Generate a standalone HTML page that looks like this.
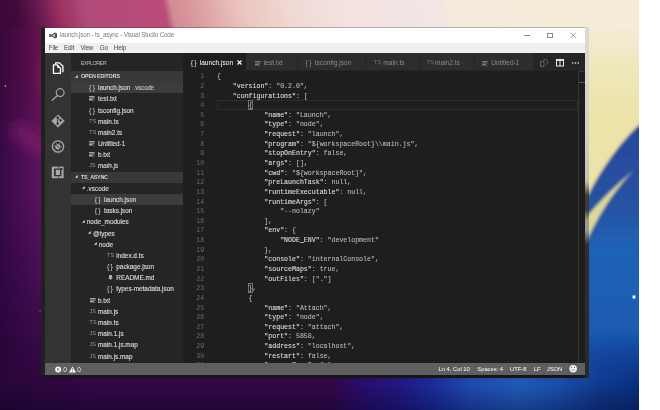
<!DOCTYPE html>
<html><head><meta charset="utf-8">
<style>
*{margin:0;padding:0;box-sizing:border-box}
html,body{width:660px;height:410px;overflow:hidden}
body{position:relative;font-family:"Liberation Sans",sans-serif;background:#3e0a4c}
.a{position:absolute}
#white{left:639px;top:0;width:21px;height:410px;background:#fff}
#bl{left:41px;top:27px;width:4px;height:351px;background:#202020}
#bb{left:41px;top:375px;width:548px;height:3px;background:#161616}
#bt{left:41px;top:27px;width:548px;height:1px;background:rgba(60,60,60,.35)}
#br{left:585px;top:27px;width:4px;height:351px;background:linear-gradient(#dcdad4 0,#d2d0c6 30%,#c4c2b4 44%,#3c3c3c 48%,#3a3a3a 52%,#9a9a90 55%,#9a9a90 58%,#2e2e2e 62%,#2a2a2a 100%)}
#title{left:45px;top:28px;width:540px;height:15px;background:#fff}
#menu{left:45px;top:43px;width:540px;height:10px;background:#f0f0f0}
#act{left:45px;top:53px;width:26px;height:310px;background:#333}
#side{left:71px;top:53px;width:112px;height:310px;background:#252526;overflow:hidden}
#tabs{left:183px;top:53px;width:402px;height:18px;background:#252526}
#ed{left:183px;top:71px;width:402px;height:292px;background:#1e1e1e;overflow:hidden}
#status{left:45px;top:363px;width:540px;height:12px;background:#5f5f5f}
.t{white-space:nowrap}
.tt{font-size:6.3px;color:#7c7c7c;line-height:14px;letter-spacing:-0.17px}
.mn{font-size:6.3px;color:#4a4a4a;line-height:10px;letter-spacing:-0.2px}
.sh{left:0;width:112px;height:11.18px;background:#383838}
.sel{left:0;width:112px;height:11.18px;background:#3c3c3c}
.sx{font-size:6.4px;color:#d6d6d6;line-height:11.18px;white-space:nowrap;-webkit-text-stroke:0.15px #d6d6d6}
.ic{font-size:6px;color:#c5c5c5;line-height:11.18px;white-space:nowrap}
.lang{font-size:5.4px;color:#9a9a9a;line-height:11.18px;white-space:nowrap;letter-spacing:0.1px}
.hd{font-size:5.4px;color:#d6d6d6;line-height:11.18px;font-weight:bold;white-space:nowrap;letter-spacing:-0.15px}
.tri{width:0;height:0;border-left:2.2px solid transparent;border-right:2.2px solid transparent;border-top:2.6px solid #c0c0c0;transform:rotate(-45deg)}
.code{font-family:"Liberation Mono",monospace;font-size:6.58px;color:#cccccc;white-space:pre;line-height:9.61px}
.k{color:#dadada;-webkit-text-stroke:0.12px #dadada}.v{color:#b8b8b8;-webkit-text-stroke:0.1px #b8b8b8}
.ln{font-family:"Liberation Mono",monospace;font-size:6.58px;color:#6a6a6a;white-space:pre;line-height:9.61px;text-align:right;width:30px}
.tab{top:0;height:17px;background:#2d2d2d;border-right:1px solid #252526}
.tabt{font-size:6.6px;color:#8c8c8c;line-height:17px;white-space:nowrap}
.sb{font-size:5.8px;color:#fff;line-height:12px;white-space:nowrap}
</style></head><body>
<div id="root" class="a" style="left:0;top:0;width:660px;height:410px;overflow:hidden;will-change:transform">
<svg class="a" style="left:0;top:0" width="660" height="410" viewBox="0 0 660 410">
<defs>
<linearGradient id="gTop" gradientUnits="userSpaceOnUse" x1="0" y1="13.5" x2="629.5" y2="-125">
<stop offset="0.0000" stop-color="#3a0a38"/>
<stop offset="0.0273" stop-color="#400b3b"/>
<stop offset="0.0606" stop-color="#6a1a50"/>
<stop offset="0.0909" stop-color="#9a3060"/>
<stop offset="0.1288" stop-color="#b04a78"/>
<stop offset="0.2500" stop-color="#bb4c7a"/>
<stop offset="0.2621" stop-color="#d38a96"/>
<stop offset="0.3030" stop-color="#dc9fa0"/>
<stop offset="0.3636" stop-color="#eac4bc"/>
<stop offset="0.4394" stop-color="#f0d8d2"/>
<stop offset="0.5152" stop-color="#f2e2e0"/>
<stop offset="0.6712" stop-color="#f3e6e5"/>
<stop offset="0.6803" stop-color="#f6ebdb"/>
<stop offset="1.0000" stop-color="#f6ecd8"/>
</linearGradient>
<linearGradient id="gLA" gradientUnits="userSpaceOnUse" x1="0" y1="0" x2="45" y2="0">
<stop offset="0" stop-color="#3a083a"/><stop offset="0.45" stop-color="#4a0c44"/><stop offset="1" stop-color="#6c1450"/>
</linearGradient>
<linearGradient id="gLB" gradientUnits="userSpaceOnUse" x1="0" y1="0" x2="45" y2="0">
<stop offset="0" stop-color="#360a46"/><stop offset="0.5" stop-color="#4a0e55"/><stop offset="1" stop-color="#5c1660"/>
</linearGradient>
<linearGradient id="gLC" gradientUnits="userSpaceOnUse" x1="0" y1="0" x2="45" y2="0">
<stop offset="0" stop-color="#28063a"/><stop offset="1" stop-color="#3a0a4c"/>
</linearGradient>
<linearGradient id="mB" gradientUnits="userSpaceOnUse" x1="0" y1="60" x2="0" y2="160">
<stop offset="0" stop-color="#fff" stop-opacity="0"/><stop offset="1" stop-color="#fff" stop-opacity="1"/>
</linearGradient>
<linearGradient id="mC" gradientUnits="userSpaceOnUse" x1="0" y1="200" x2="0" y2="350">
<stop offset="0" stop-color="#fff" stop-opacity="0"/><stop offset="1" stop-color="#fff" stop-opacity="1"/>
</linearGradient>
<linearGradient id="mBot" gradientUnits="userSpaceOnUse" x1="0" y1="335" x2="0" y2="385"><stop offset="0" stop-color="#fff" stop-opacity="0"/><stop offset="1" stop-color="#fff" stop-opacity="1"/></linearGradient>
<mask id="maskBot"><rect x="0" y="0" width="660" height="410" fill="url(#mBot)"/></mask>
<mask id="maskB"><rect x="0" y="0" width="660" height="410" fill="url(#mB)"/></mask>
<mask id="maskC"><rect x="0" y="0" width="660" height="410" fill="url(#mC)"/></mask>
<linearGradient id="gBot" gradientUnits="userSpaceOnUse" x1="0" y1="0" x2="660" y2="0">
<stop offset="0.0000" stop-color="#2a063a"/>
<stop offset="0.1515" stop-color="#340846"/>
<stop offset="0.5000" stop-color="#340846"/>
<stop offset="0.5394" stop-color="#2c0c6a"/>
<stop offset="0.6061" stop-color="#221a86"/>
<stop offset="0.6515" stop-color="#1c2c9e"/>
<stop offset="0.7121" stop-color="#1f4eb6"/>
<stop offset="0.7879" stop-color="#2260c0"/>
<stop offset="0.8485" stop-color="#1a52b0"/>
<stop offset="0.9091" stop-color="#0f3c92"/>
<stop offset="0.9682" stop-color="#0a3080"/>
<stop offset="1.0000" stop-color="#0a3080"/>
</linearGradient>
<linearGradient id="gBotV" gradientUnits="userSpaceOnUse" x1="0" y1="380" x2="0" y2="410"><stop offset="0" stop-color="#000020" stop-opacity="0"/><stop offset="1" stop-color="#000020" stop-opacity="0.35"/></linearGradient>
<linearGradient id="gRight" gradientUnits="userSpaceOnUse" x1="0" y1="0" x2="0" y2="410">
<stop offset="0" stop-color="#f6ecd6"/>
<stop offset="0.1" stop-color="#f3ead0"/>
<stop offset="0.16" stop-color="#efe7bc"/>
<stop offset="0.28" stop-color="#ebe3a8"/>
<stop offset="1" stop-color="#e8e0a0"/>
</linearGradient>
<linearGradient id="gBlue" gradientUnits="userSpaceOnUse" x1="0" y1="120" x2="0" y2="410">
<stop offset="0" stop-color="#27489a"/>
<stop offset="0.3" stop-color="#2552a2"/>
<stop offset="0.45" stop-color="#1e62b6"/>
<stop offset="0.72" stop-color="#1a5ab0"/>
<stop offset="0.88" stop-color="#1446a0"/>
<stop offset="1" stop-color="#0a2c78"/>
</linearGradient>
<filter id="bl2" filterUnits="userSpaceOnUse" x="-20" y="40" width="90" height="200"><feGaussianBlur stdDeviation="7"/></filter>
<filter id="fblur" filterUnits="userSpaceOnUse" x="560" y="0" width="100" height="410"><feGaussianBlur stdDeviation="1.6"/></filter>
</defs>
<rect width="660" height="410" fill="#2d053c"/>
<rect x="0" y="0" width="45" height="410" fill="url(#gLA)"/>
<rect x="0" y="0" width="45" height="410" fill="url(#gLB)" mask="url(#maskB)"/>
<rect x="0" y="0" width="45" height="410" fill="url(#gLC)" mask="url(#maskC)"/>
<g filter="url(#bl2)"><ellipse cx="32" cy="140" rx="26" ry="11" fill="#7c1c66" opacity="0.75" transform="rotate(38 32 140)"/><ellipse cx="42" cy="75" rx="8" ry="30" fill="#6c1450" opacity="0.3"/></g>
<g filter="url(#fblur)">
<rect x="585" y="0" width="75" height="380" fill="url(#gRight)"/>
<path d="M660 110 L639 125 Q612 150 589 193 L578 212 L578 410 L660 410 Z" fill="url(#gBlue)"/>
<path d="M578 222 L589 214 Q606 194 634 170 Q608 196 589 236 L578 250 Z" fill="#dcd89a"/>
</g>
<rect x="0" y="330" width="660" height="80" fill="url(#gBot)" mask="url(#maskBot)"/>
<rect x="0" y="375" width="660" height="35" fill="url(#gBotV)"/>
<rect x="0" y="0" width="660" height="28" fill="url(#gTop)"/>
<circle cx="634" cy="297" r="2.2" fill="#9fc8ff" opacity="0.6"/><circle cx="634" cy="297" r="1.2" fill="#fff"/><circle cx="5.5" cy="86" r="0.8" fill="#e0c8e0"/><circle cx="40" cy="311" r="0.5" fill="#c8a8d8"/>
</svg>

<div id="white" class="a"></div>
<div id="bl" class="a"></div>
<div id="bb" class="a"></div>
<div id="bt" class="a"></div>
<div id="br" class="a"></div>
<div id="title" class="a"></div>
<div id="menu" class="a"></div>
<div id="act" class="a"></div>
<div id="side" class="a"></div>
<div id="tabs" class="a"></div>
<div id="ed" class="a"></div>
<div id="status" class="a"></div>
<svg class="a" style="left:48.6px;top:32px" width="8.4" height="7" viewBox="0 0 8.4 7"><g fill="#5a5a5a"><path d="M5.7 0.4 L8.1 1.2 V5.8 L5.7 6.6 Z"/><rect x="0.2" y="2" width="1.3" height="3"/></g><path d="M1 2.3 L6.2 6 M1 4.7 L6.2 1" stroke="#5a5a5a" stroke-width="1.25"/></svg>
<div class="a t tt" style="left:60px;top:28px">launch.json - ts_async - Visual Studio Code</div>
<div class="a" style="left:524px;top:34.7px;width:6px;height:0.8px;background:#8a8a8a"></div>
<div class="a" style="left:547px;top:32.6px;width:5.6px;height:5.4px;border:0.8px solid #8a8a8a"></div>
<svg class="a" style="left:570px;top:32px" width="7" height="7" viewBox="0 0 7 7"><path d="M0.5 0.5 L6 6 M6 0.5 L0.5 6" stroke="#8a8a8a" stroke-width="0.8"/></svg>
<div class="a t mn" style="left:48.8px;top:43px">File</div>
<div class="a t mn" style="left:63.9px;top:43px">Edit</div>
<div class="a t mn" style="left:80.4px;top:43px">View</div>
<div class="a t mn" style="left:99.8px;top:43px">Go</div>
<div class="a t mn" style="left:113.8px;top:43px">Help</div>
<svg class="a" style="left:45px;top:53px" width="26" height="310" viewBox="0 0 26 310">
<g fill="none" stroke="#ffffff" stroke-width="1.3" stroke-linejoin="round">
<path d="M8.45 11.95 H12.3 L15.45 15.1 V20.45 H8.45 Z"/>
<path d="M10.6 11.3 V9.85 H14.5 L17.9 13.25 V19.2"/>
</g>
<path d="M12.3 11.95 V15.1 H15.45 Z" fill="#ffffff"/>
<g fill="none" stroke="#a0a0a0" stroke-width="1.25">
<circle cx="15.2" cy="39.6" r="3.9"/>
<path d="M12.4 42.6 L7.2 47.2" stroke-width="1.5" stroke-linecap="round"/>
</g>
<path d="M13 61.8 L19.4 68 L13 74.3 L6.7 68 Z" fill="#a8a8a8" stroke="#a8a8a8" stroke-width="0.6" stroke-linejoin="round"/>
<g stroke="#333" stroke-width="0.9" fill="#333"><path d="M12.6 64.6 V70.6 M12.6 64.6 L15.5 67.3"/><circle cx="12.6" cy="64.6" r="0.9"/><circle cx="12.6" cy="70.6" r="0.9"/><circle cx="15.6" cy="67.4" r="0.9"/></g>
<circle cx="13" cy="93.5" r="5.7" fill="none" stroke="#a8a8a8" stroke-width="1.25"/>
<path d="M11.2 91.4 Q13.3 90.2 15.2 92.3 L15.6 95 Q14.2 97.2 11.8 96.2 Q10 94.8 10.3 92.6 Z" fill="#a8a8a8"/>
<g stroke="#a8a8a8" stroke-width="0.7"><path d="M11.6 91.2 L10.6 89.6 M14.4 91.2 L15.2 89.5 M10.3 93.5 L8.8 93.3 M15.6 93.8 L17.2 93.6 M10.8 95.5 L9.5 96.8"/></g>
<path d="M9.3 89.8 L16.9 97.3" stroke="#333" stroke-width="0.9"/>
<rect x="6.8" y="113.6" width="11.8" height="11.6" fill="#a8a8a8"/>
<rect x="9" y="115.5" width="7.5" height="7.8" fill="#333"/>
<rect x="10.8" y="116.8" width="4.2" height="5.2" fill="#a8a8a8"/>
<path d="M13.4 113.4 V115.6 M13.4 123.2 V125.4" stroke="#333" stroke-width="0.8"/>
<rect x="15.6" y="115" width="1.8" height="2" fill="#333"/>
</svg>
<div class="a" style="left:71px;top:53px;width:112px;height:310px;overflow:hidden"><div class="a t hd" style="left:9.7px;top:5px;font-weight:normal;color:#bbbbbb;font-size:5.4px;letter-spacing:-0.5px;line-height:10px">EXPLORER</div><div class="a sh" style="top:18.00px"></div><div class="a sh" style="top:118.62px"></div><div class="a sel" style="top:29.18px"></div><div class="a sel" style="top:140.98px"></div><svg class="a" style="left:2.90px;top:20.69px" width="5" height="5" viewBox="0 0 5 5"><polygon points="3.8,0.9 3.8,3.7 0.9,3.7" fill="#d8d8d8"/></svg><div class="a hd" style="left:10.00px;top:18.00px;">OPEN EDITORS</div><div class="a ic" style="left:18.00px;top:29.18px;letter-spacing:1.3px;font-size:7px;color:#d0d0d0">{}</div><div class="a sx" style="left:27.00px;top:29.18px;">launch.json</div><svg class="a" style="left:18.30px;top:43.45px" width="6" height="5" viewBox="0 0 6 5"><path d="M0 0.6H5.6M0 2.1H5.6M0 3.6H3.8M0 5.1H5.6" stroke="#c8c8c8" stroke-width="0.85"/></svg><div class="a sx" style="left:27.00px;top:40.36px;">test.txt</div><div class="a ic" style="left:18.00px;top:51.54px;letter-spacing:1.3px;font-size:7px;color:#d0d0d0">{}</div><div class="a sx" style="left:27.00px;top:51.54px;">tsconfig.json</div><div class="a lang" style="left:18.30px;top:62.72px;">TS</div><div class="a sx" style="left:27.00px;top:62.72px;">main.ts</div><div class="a lang" style="left:18.30px;top:73.90px;">TS</div><div class="a sx" style="left:27.00px;top:73.90px;">main2.ts</div><svg class="a" style="left:18.30px;top:88.17px" width="6" height="5" viewBox="0 0 6 5"><path d="M0 0.6H5.6M0 2.1H5.6M0 3.6H3.8M0 5.1H5.6" stroke="#c8c8c8" stroke-width="0.85"/></svg><div class="a sx" style="left:27.00px;top:85.08px;">Untitled-1</div><svg class="a" style="left:18.30px;top:99.35px" width="6" height="5" viewBox="0 0 6 5"><path d="M0 0.6H5.6M0 2.1H5.6M0 3.6H3.8M0 5.1H5.6" stroke="#c8c8c8" stroke-width="0.85"/></svg><div class="a sx" style="left:27.00px;top:96.26px;">b.txt</div><div class="a lang" style="left:18.30px;top:107.44px;">JS</div><div class="a sx" style="left:27.00px;top:107.44px;font-style:italic">main.js</div><div class="a sx" style="left:62.80px;top:29.18px;font-size:6.3px;color:#a8a8a8;letter-spacing:-0.2px">.vscode</div><svg class="a" style="left:2.90px;top:121.31px" width="5" height="5" viewBox="0 0 5 5"><polygon points="3.8,0.9 3.8,3.7 0.9,3.7" fill="#d8d8d8"/></svg><div class="a hd" style="left:10.00px;top:118.62px;letter-spacing:-0.25px">TS_ASYNC</div><svg class="a" style="left:9.90px;top:132.49px" width="5" height="5" viewBox="0 0 5 5"><polygon points="3.8,0.9 3.8,3.7 0.9,3.7" fill="#d8d8d8"/></svg><div class="a sx" style="left:15.80px;top:129.80px;">.vscode</div><div class="a ic" style="left:23.70px;top:140.98px;letter-spacing:1.3px;font-size:7px;color:#d0d0d0">{}</div><div class="a sx" style="left:33.00px;top:140.98px;">launch.json</div><div class="a ic" style="left:23.70px;top:152.16px;letter-spacing:1.3px;font-size:7px;color:#d0d0d0">{}</div><div class="a sx" style="left:33.00px;top:152.16px;">tasks.json</div><svg class="a" style="left:9.90px;top:166.03px" width="5" height="5" viewBox="0 0 5 5"><polygon points="3.8,0.9 3.8,3.7 0.9,3.7" fill="#d8d8d8"/></svg><div class="a sx" style="left:15.80px;top:163.34px;">node_modules</div><svg class="a" style="left:15.70px;top:177.21px" width="5" height="5" viewBox="0 0 5 5"><polygon points="3.8,0.9 3.8,3.7 0.9,3.7" fill="#d8d8d8"/></svg><div class="a sx" style="left:22.00px;top:174.52px;">@types</div><svg class="a" style="left:22.30px;top:188.39px" width="5" height="5" viewBox="0 0 5 5"><polygon points="3.8,0.9 3.8,3.7 0.9,3.7" fill="#d8d8d8"/></svg><div class="a sx" style="left:27.80px;top:185.70px;">node</div><div class="a lang" style="left:36.00px;top:196.88px;">TS</div><div class="a sx" style="left:45.30px;top:196.88px;">index.d.ts</div><div class="a ic" style="left:35.90px;top:208.06px;letter-spacing:1.3px;font-size:7px;color:#d0d0d0">{}</div><div class="a sx" style="left:45.30px;top:208.06px;">package.json</div><svg class="a" style="left:37.20px;top:222.33px" width="5" height="5" viewBox="0 0 5 5"><path d="M1 0H4V2.5H5L2.5 5L0 2.5H1Z" fill="#aaaaaa"/></svg><div class="a sx" style="left:45.30px;top:219.24px;">README.md</div><div class="a ic" style="left:35.90px;top:230.42px;letter-spacing:1.3px;font-size:7px;color:#d0d0d0">{}</div><div class="a sx" style="left:45.30px;top:230.42px;">types-metadata.json</div><svg class="a" style="left:18.50px;top:244.69px" width="6" height="5" viewBox="0 0 6 5"><path d="M0 0.6H5.6M0 2.1H5.6M0 3.6H3.8M0 5.1H5.6" stroke="#c8c8c8" stroke-width="0.85"/></svg><div class="a sx" style="left:27.00px;top:241.60px;">b.txt</div><div class="a lang" style="left:18.50px;top:252.78px;">JS</div><div class="a sx" style="left:27.00px;top:252.78px;">main.js</div><div class="a lang" style="left:18.50px;top:263.96px;">TS</div><div class="a sx" style="left:27.00px;top:263.96px;">main.ts</div><div class="a lang" style="left:18.50px;top:275.14px;">JS</div><div class="a sx" style="left:27.00px;top:275.14px;">main.1.js</div><div class="a lang" style="left:18.50px;top:286.32px;">JS</div><div class="a sx" style="left:27.00px;top:286.32px;">main.1.js.map</div><div class="a lang" style="left:18.50px;top:297.50px;">JS</div><div class="a sx" style="left:27.00px;top:297.50px;">main.js.map</div></div>
<div class="a" style="left:183px;top:53px;width:63px;height:18px;background:#1e1e1e;"></div>
<div class="a" style="left:246px;top:53px;width:52px;height:18px;background:#2d2d2d;border-right:1px solid #252526;border-bottom:1px solid #252526"></div>
<div class="a" style="left:298px;top:53px;width:68px;height:18px;background:#2d2d2d;border-right:1px solid #252526;border-bottom:1px solid #252526"></div>
<div class="a" style="left:366px;top:53px;width:54px;height:18px;background:#2d2d2d;border-right:1px solid #252526;border-bottom:1px solid #252526"></div>
<div class="a" style="left:420px;top:53px;width:55px;height:18px;background:#2d2d2d;border-right:1px solid #252526;border-bottom:1px solid #252526"></div>
<div class="a" style="left:475px;top:53px;width:59px;height:18px;background:#2d2d2d;border-right:1px solid #252526;border-bottom:1px solid #252526"></div>
<div class="a t" style="left:190.7px;top:53.5px;font-size:7px;line-height:18px;color:#e0e0e0;letter-spacing:1.3px">{}</div>
<div class="a t tabt" style="left:199.7px;top:54px;color:#ffffff;line-height:18px">launch.json</div>
<svg class="a" style="left:254.8px;top:60.5px" width="6" height="5" viewBox="0 0 6 5"><path d="M0 0.5H5.5M0 2H5.5M0 3.5H4M0 5H5.5" stroke="#8a8a8a" stroke-width="0.8"/></svg>
<div class="a t tabt" style="left:263.4px;top:54px;color:#8c8c8c;line-height:18px">test.txt</div>
<div class="a t" style="left:305.5px;top:53.5px;font-size:7px;line-height:18px;color:#8a8a8a;letter-spacing:1.3px">{}</div>
<div class="a t tabt" style="left:314.7px;top:54px;color:#8c8c8c;line-height:18px">tsconfig.json</div>
<div class="a t" style="left:373.6px;top:53.2px;font-size:6px;line-height:18px;color:#6e6e6e;letter-spacing:0px">TS</div>
<div class="a t tabt" style="left:383.3px;top:54px;color:#8c8c8c;line-height:18px">main.ts</div>
<div class="a t" style="left:426.4px;top:53.2px;font-size:6px;line-height:18px;color:#6e6e6e;letter-spacing:0px">TS</div>
<div class="a t tabt" style="left:435px;top:54px;color:#8c8c8c;line-height:18px">main2.ts</div>
<svg class="a" style="left:482.3px;top:60.5px" width="6" height="5" viewBox="0 0 6 5"><path d="M0 0.5H5.5M0 2H5.5M0 3.5H4M0 5H5.5" stroke="#8a8a8a" stroke-width="0.8"/></svg>
<div class="a t tabt" style="left:491.3px;top:54px;color:#8c8c8c;line-height:18px">Untitled-1</div>
<svg class="a" style="left:237px;top:60px" width="5" height="5" viewBox="0 0 5 5"><path d="M0.5 0.5 L4.5 4.5 M4.5 0.5 L0.5 4.5" stroke="#ffffff" stroke-width="1.1"/></svg>
<svg class="a" style="left:538px;top:57px" width="46" height="12" viewBox="0 0 46 12">
<g fill="none" stroke="#6a6a6a" stroke-width="0.9"><path d="M2.5 4.5 H6 V9.5 H2.5 Z"/><path d="M5 3 A2.6 2.6 0 1 1 8.5 7.5"/></g>
<g fill="none" stroke="#e8e8e8" stroke-width="1"><rect x="18.5" y="2.5" width="7" height="6.5"/><path d="M22 2.5 V9"/><path d="M18.5 3.2 H25.5" stroke-width="1.4"/></g>
<g fill="#d8d8d8"><rect x="34" y="5.3" width="1.4" height="1.4"/><rect x="36.8" y="5.3" width="1.4" height="1.4"/><rect x="39.6" y="5.3" width="1.4" height="1.4"/></g>
</svg>
<div class="a" style="left:183px;top:71px;width:402px;height:292px;overflow:hidden"><div class="a" style="left:34px;top:29.10px;width:361px;height:9.63px;border:1px solid #2c2c2c"></div><div class="a" style="left:64.98px;top:29.20px;width:4.95px;height:9.44px;border:0.8px solid #747474;background:#1e1e1e"></div><div class="a" style="left:64.98px;top:212.27px;width:4.95px;height:9.44px;border:0.8px solid #747474;background:#1e1e1e"></div><div class="a ln" style="left:-8.8px;top:1.30px">1</div><div class="a code" style="left:34px;top:1.30px">{</div><div class="a ln" style="left:-8.8px;top:10.93px">2</div><div class="a code" style="left:34px;top:10.93px"><span class="k">    &quot;version&quot;</span>:<span class="v"> &quot;0.2.0&quot;,</span></div><div class="a ln" style="left:-8.8px;top:20.57px">3</div><div class="a code" style="left:34px;top:20.57px"><span class="k">    &quot;configurations&quot;</span>:<span class="v"> [</span></div><div class="a ln" style="left:-8.8px;top:30.20px">4</div><div class="a code" style="left:34px;top:30.20px">        {</div><div class="a ln" style="left:-8.8px;top:39.84px">5</div><div class="a code" style="left:34px;top:39.84px"><span class="k">            &quot;name&quot;</span>:<span class="v"> &quot;Launch&quot;,</span></div><div class="a ln" style="left:-8.8px;top:49.47px">6</div><div class="a code" style="left:34px;top:49.47px"><span class="k">            &quot;type&quot;</span>:<span class="v"> &quot;node&quot;,</span></div><div class="a ln" style="left:-8.8px;top:59.11px">7</div><div class="a code" style="left:34px;top:59.11px"><span class="k">            &quot;request&quot;</span>:<span class="v"> &quot;launch&quot;,</span></div><div class="a ln" style="left:-8.8px;top:68.74px">8</div><div class="a code" style="left:34px;top:68.74px"><span class="k">            &quot;program&quot;</span>:<span class="v"> &quot;${workspaceRoot}\\main.js&quot;,</span></div><div class="a ln" style="left:-8.8px;top:78.38px">9</div><div class="a code" style="left:34px;top:78.38px"><span class="k">            &quot;stopOnEntry&quot;</span>:<span class="v"> false,</span></div><div class="a ln" style="left:-8.8px;top:88.02px">10</div><div class="a code" style="left:34px;top:88.02px"><span class="k">            &quot;args&quot;</span>:<span class="v"> [],</span></div><div class="a ln" style="left:-8.8px;top:97.65px">11</div><div class="a code" style="left:34px;top:97.65px"><span class="k">            &quot;cwd&quot;</span>:<span class="v"> &quot;${workspaceRoot}&quot;,</span></div><div class="a ln" style="left:-8.8px;top:107.28px">12</div><div class="a code" style="left:34px;top:107.28px"><span class="k">            &quot;preLaunchTask&quot;</span>:<span class="v"> null,</span></div><div class="a ln" style="left:-8.8px;top:116.92px">13</div><div class="a code" style="left:34px;top:116.92px"><span class="k">            &quot;runtimeExecutable&quot;</span>:<span class="v"> null,</span></div><div class="a ln" style="left:-8.8px;top:126.55px">14</div><div class="a code" style="left:34px;top:126.55px"><span class="k">            &quot;runtimeArgs&quot;</span>:<span class="v"> [</span></div><div class="a ln" style="left:-8.8px;top:136.19px">15</div><div class="a code" style="left:34px;top:136.19px"><span class="v">                &quot;--nolazy&quot;</span></div><div class="a ln" style="left:-8.8px;top:145.82px">16</div><div class="a code" style="left:34px;top:145.82px">            ],</div><div class="a ln" style="left:-8.8px;top:155.46px">17</div><div class="a code" style="left:34px;top:155.46px"><span class="k">            &quot;env&quot;</span>:<span class="v"> {</span></div><div class="a ln" style="left:-8.8px;top:165.09px">18</div><div class="a code" style="left:34px;top:165.09px"><span class="k">                &quot;NODE_ENV&quot;</span>:<span class="v"> &quot;development&quot;</span></div><div class="a ln" style="left:-8.8px;top:174.73px">19</div><div class="a code" style="left:34px;top:174.73px">            },</div><div class="a ln" style="left:-8.8px;top:184.37px">20</div><div class="a code" style="left:34px;top:184.37px"><span class="k">            &quot;console&quot;</span>:<span class="v"> &quot;internalConsole&quot;,</span></div><div class="a ln" style="left:-8.8px;top:194.00px">21</div><div class="a code" style="left:34px;top:194.00px"><span class="k">            &quot;sourceMaps&quot;</span>:<span class="v"> true,</span></div><div class="a ln" style="left:-8.8px;top:203.63px">22</div><div class="a code" style="left:34px;top:203.63px"><span class="k">            &quot;outFiles&quot;</span>:<span class="v"> [&quot;.&quot;]</span></div><div class="a ln" style="left:-8.8px;top:213.27px">23</div><div class="a code" style="left:34px;top:213.27px">        },</div><div class="a ln" style="left:-8.8px;top:222.90px">24</div><div class="a code" style="left:34px;top:222.90px">        {</div><div class="a ln" style="left:-8.8px;top:232.54px">25</div><div class="a code" style="left:34px;top:232.54px"><span class="k">            &quot;name&quot;</span>:<span class="v"> &quot;Attach&quot;,</span></div><div class="a ln" style="left:-8.8px;top:242.18px">26</div><div class="a code" style="left:34px;top:242.18px"><span class="k">            &quot;type&quot;</span>:<span class="v"> &quot;node&quot;,</span></div><div class="a ln" style="left:-8.8px;top:251.81px">27</div><div class="a code" style="left:34px;top:251.81px"><span class="k">            &quot;request&quot;</span>:<span class="v"> &quot;attach&quot;,</span></div><div class="a ln" style="left:-8.8px;top:261.44px">28</div><div class="a code" style="left:34px;top:261.44px"><span class="k">            &quot;port&quot;</span>:<span class="v"> 5858,</span></div><div class="a ln" style="left:-8.8px;top:271.08px">29</div><div class="a code" style="left:34px;top:271.08px"><span class="k">            &quot;address&quot;</span>:<span class="v"> &quot;localhost&quot;,</span></div><div class="a ln" style="left:-8.8px;top:280.72px">30</div><div class="a code" style="left:34px;top:280.72px"><span class="k">            &quot;restart&quot;</span>:<span class="v"> false,</span></div><div class="a ln" style="left:-8.8px;top:290.35px">31</div><div class="a code" style="left:34px;top:290.35px"><span class="k">            &quot;sourceMaps&quot;</span>:<span class="v"> false,</span></div><div class="a" style="left:394.6px;top:0.3px;width:0.9px;height:292px;background:#363636"></div><div class="a" style="left:396px;top:0.3px;width:6px;height:0.8px;background:#3a3a3a"></div><div class="a" style="left:396px;top:11.1px;width:6px;height:0.9px;background:#5a5a5a"></div></div>
<svg class="a" style="left:54.5px;top:366px" width="30" height="7" viewBox="0 0 30 7">
<circle cx="3.2" cy="3.4" r="3" fill="#fff"/><path d="M1.9 2.1 L4.5 4.7 M4.5 2.1 L1.9 4.7" stroke="#5f5f5f" stroke-width="0.9"/>
<path d="M17.5 0.4 L21 6.5 H14 Z" fill="#fff"/><path d="M17.5 2.2 V4.4 M17.5 5.1 V5.8" stroke="#5f5f5f" stroke-width="0.7"/>
</svg>
<div class="a t sb" style="left:63.2px;top:363.7px;font-size:6.6px;color:#e8e8e8">0</div>
<div class="a t sb" style="left:77.2px;top:363.7px;font-size:6.6px;color:#e8e8e8">0</div>
<div class="a t sb" style="left:438.5px;top:363px">Ln 4, Col 10</div>
<div class="a t sb" style="left:477.3px;top:363px">Spaces: 4</div>
<div class="a t sb" style="left:510px;top:363px">UTF-8</div>
<div class="a t sb" style="left:533.8px;top:363px">LF</div>
<div class="a t sb" style="left:546.8px;top:363px">JSON</div>
<svg class="a" style="left:569px;top:365.3px" width="8" height="8" viewBox="0 0 8 8"><circle cx="4.15" cy="3.75" r="3.75" fill="#f4f4f4"/><circle cx="2.7" cy="2.4" r="0.55" fill="#5f5f5f"/><circle cx="5.6" cy="2.4" r="0.55" fill="#5f5f5f"/><path d="M2.3 4.6 Q4.15 6.2 6 4.6" stroke="#5f5f5f" stroke-width="0.6" fill="none"/></svg>
</div>
</body></html>
